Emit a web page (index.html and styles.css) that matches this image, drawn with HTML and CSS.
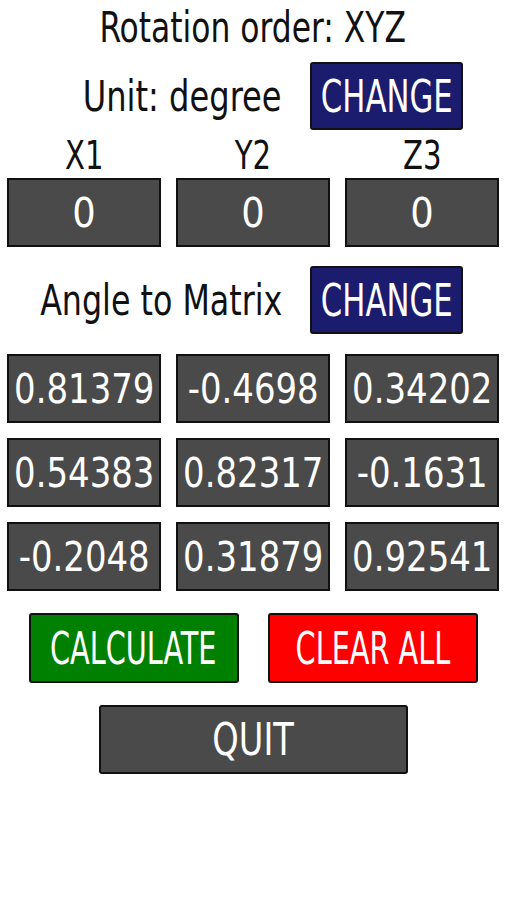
FILE: index.html
```html
<!DOCTYPE html>
<html lang="en">
<head>
  <meta charset="UTF-8">
  <meta name="viewport" content="width=device-width, initial-scale=1.0">
  <title>Rotation Converter</title>
  <link rel="stylesheet" href="styles.css">
</head>
<body>
  <main class="app">
    <p class="title"><span class="narrow">Rotation order: XYZ</span></p>

    <div class="option-row">
      <span class="option-label narrow">Unit: degree</span>
      <button class="btn btn-blue"><span class="narrow">CHANGE</span></button>
    </div>

    <div class="grid axis-labels">
      <span><span class="narrow">X1</span></span>
      <span><span class="narrow">Y2</span></span>
      <span><span class="narrow">Z3</span></span>
    </div>
    <div class="grid">
      <div class="cell">0</div>
      <div class="cell">0</div>
      <div class="cell">0</div>
    </div>

    <div class="option-row mode-row">
      <span class="option-label narrow">Angle to Matrix</span>
      <button class="btn btn-blue"><span class="narrow">CHANGE</span></button>
    </div>

    <!-- rotation matrix, row by row -->
    <div class="grid matrix">
      <div class="cell"><span class="narrow">0.81379</span></div>
      <div class="cell"><span class="narrow">-0.4698</span></div>
      <div class="cell"><span class="narrow">0.34202</span></div>
      <div class="cell"><span class="narrow">0.54383</span></div>
      <div class="cell"><span class="narrow">0.82317</span></div>
      <div class="cell"><span class="narrow">-0.1631</span></div>
      <div class="cell"><span class="narrow">-0.2048</span></div>
      <div class="cell"><span class="narrow">0.31879</span></div>
      <div class="cell"><span class="narrow">0.92541</span></div>
    </div>

    <div class="actions">
      <button class="btn btn-green"><span class="narrow">CALCULATE</span></button>
      <button class="btn btn-red"><span class="narrow">CLEAR ALL</span></button>
    </div>
    <button class="btn btn-gray quit"><span class="narrow">QUIT</span></button>
  </main>
</body>
</html>
```

FILE: styles.css
```css
/* Reset & Fonts */
* {
  margin: 0;
  padding: 0;
  box-sizing: border-box;
}

body {
  font-family: 'DejaVu Sans Condensed', 'DejaVu Sans', sans-serif;
  font-stretch: condensed;
  color: #111;
  background-color: #fff;
}

.narrow {
  display: inline-block;
  white-space: nowrap;
  transform: scaleX(0.83);
}

.app {
  display: flex;
  flex-direction: column;
  align-items: center;
  padding: 4px 0 0;
}

.title {
  font-size: 42px;
  line-height: 48px;
}

/* Label + CHANGE rows */
.option-row {
  display: flex;
  align-items: center;
  justify-content: flex-end;
  gap: 28px;
  width: 100%;
  margin-top: 10px;
  padding-right: 43px;
}

.option-label {
  font-size: 43px;
  transform-origin: right center;
}

.mode-row {
  margin-top: 19px;
}

.mode-row .option-label {
  transform: scaleX(0.82);
}

/* Grids */
.grid {
  display: grid;
  grid-template-columns: repeat(3, 154px);
  gap: 15px;
}

.axis-labels {
  margin-top: 4px;
  text-align: center;
  font-size: 39px;
  line-height: 44px;
}

.cell {
  display: flex;
  justify-content: center;
  align-items: center;
  height: 69px;
  background-color: #4a4a4a;
  border: 2px solid #111;
  color: #fff;
  font-size: 41px;
  white-space: nowrap;
}

.cell .narrow {
  transform: scaleX(0.92);
}

.matrix {
  margin-top: 20px;
}

/* Buttons */
.btn {
  display: flex;
  justify-content: center;
  align-items: center;
  padding: 0;
  font-family: inherit;
  font-stretch: inherit;
  font-size: 45px;
  color: #fff;
  border: 2px solid #111;
  border-radius: 3px;
  height: 68px;
  cursor: pointer;
}

.btn-blue {
  width: 153px;
  background-color: #1c1c6e;
}

.btn-blue .narrow {
  transform: scaleX(0.76);
}

.btn-green {
  background-color: #008000;
}

.btn-red {
  background-color: #ff0000;
}

.btn-gray {
  background-color: #4a4a4a;
}

.actions {
  display: flex;
  gap: 29px;
  margin-top: 22px;
}

.actions .btn {
  width: 210px;
  height: 70px;
}

.actions .narrow {
  transform: scaleX(0.71);
}

.quit {
  width: 309px;
  height: 69px;
  margin-top: 22px;
}
```
